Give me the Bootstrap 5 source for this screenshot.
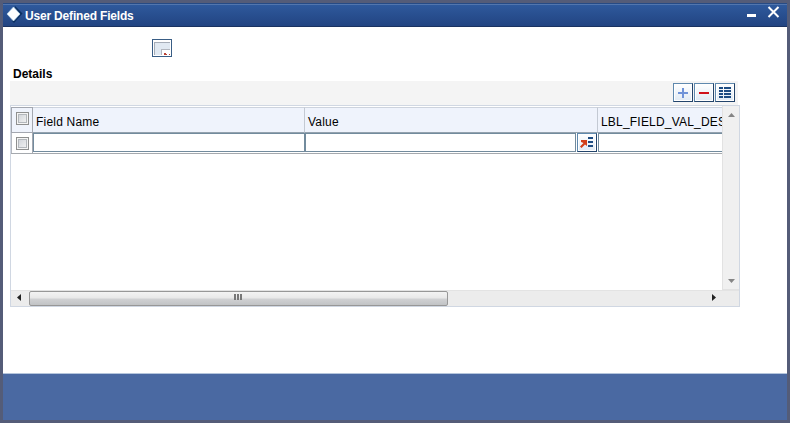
<!DOCTYPE html>
<html lang="en">

<head>
    <meta charset="UTF-8">
    <meta name="viewport" content="width=device-width, initial-scale=1.0">
    <title>User Defined Fields</title>
    <link href="https://cdn.jsdelivr.net/npm/bootstrap@5.3.0/dist/css/bootstrap.min.css" rel="stylesheet">
    <style>
        body {
            font-family: "Liberation Sans", Arial, sans-serif;
            font-size: 12px;
            line-height: 14px;
            color: #000;
        }
        svg {
            display: block;
        }
        .udf-window {
            height: 423px;
            border: 3px solid #545c78;
        }
        .udf-title {
            height: 24px;
            padding: 0 7px 0 2px;
            background: linear-gradient(#2f5a9d, #224482);
            border-top: 1px solid #274b85;
            border-bottom: 1px solid #1a3261;
            box-shadow: inset 0 1px 0 #5276ae;
            color: #fff;
        }
        .title-text {
            padding: 2px 0 0 2px;
            font-size: 12px;
            letter-spacing: -.18px;
        }
        .udf-content {
            padding: 12px 0 0 7px;
        }
        .udf-window-icon {
            margin: 0 0 9px 142px;
        }
        .udf-heading {
            height: 15px;
            font-size: 12px;
            line-height: 16px;
            margin: 0;
            padding-left: 3px;
        }
        .udf-toolbar {
            width: 728px;
            height: 24px;
            padding: 2px 3px 0 0;
            gap: 1px;
            background: #f4f4f4;
        }
        .tool-btn {
            width: 20px;
            height: 19px;
            padding: 0;
            background: linear-gradient(#fff, #e0eaf4);
            border: 1px solid #5f89ae;
            border-right: 1px solid #23446b;
            border-bottom: 1px solid #23446b;
            box-shadow: inset 0 0 0 1px #fff;
        }
        .udf-grid {
            width: 730px;
            height: 202px;
            border: 1px solid #d0d7e2;
        }
        .udf-view {
            width: 711px;
            height: 184px;
        }
        .grid-head, .grid-line {
            width: 860px;
        }
        .grid-head {
            height: 26px;
            margin-top: 1px;
            background: #eff3fc;
        }
        .grid-head > div {
            border-top: 1px solid #cdd3dd;
            border-right: 1px solid #c3c9d3;
            border-bottom: 1px solid #94a2ae;
        }
        .grid-head > .check-cell {
            border: 1px solid #a3a7b0;
        }
        .grid-line {
            height: 21px;
            border-bottom: 1px solid #a5a9ae;
        }
        .check-cell {
            width: 22px;
            border-left: 1px solid #b5b9c2;
            border-right: 1px solid #a3a7b0;
        }
        .name-cell {
            width: 272px;
        }
        .value-cell {
            width: 293px;
        }
        .desc-cell {
            width: 273px;
        }
        .head-text {
            padding: 7px 0 0 3px;
            font-size: 12px;
            letter-spacing: .2px;
            white-space: nowrap;
        }
        .grid-check {
            appearance: none;
            width: 13px;
            height: 13px;
            margin: 0;
            border: 1px solid #8e8f8f;
            box-shadow: inset 0 0 0 1px #f4f4f4, inset 0 0 0 2px #b3b7bc;
            background: linear-gradient(135deg, #cbcfd5, #f6f6f6);
        }
        .grid-line .grid-check {
            margin-top: 1px;
        }
        .grid-input {
            height: 19px;
            min-width: 0;
            padding: 0 3px;
            border: 1px solid #728b9d;
            border-radius: 0;
            font-size: 12px;
        }
        .value-cell.d-flex {
            gap: 1px;
            padding-right: 1px;
        }
        .scroll-v {
            width: 17px;
            height: 184px;
            padding: 7px 0 6px;
            border-left: 1px solid #e2e2e2;
            border-bottom: 1px solid #e2e2e2;
            background: #f0f0f0;
        }
        .scroll-h {
            width: 728px;
            height: 16px;
            background: #ececec;
            border-top: 1px solid #e3e3e3;
        }
        .scroll-thumb {
            width: 419px;
            height: 15px;
            border: 1px solid #979797;
            border-radius: 2px;
            background: linear-gradient(#f3f3f3 0, #e8e8e8 48%, #d1d2d4 52%, #c1c3c5 100%);
        }
        .scroll-right {
            margin-right: 19px;
        }
        .udf-footer {
            height: 47px;
            background: #4a69a2;
            border-top: 1px solid #b5c5dc;
        }
    </style>
</head>

<body>
    <div class="udf-window d-flex flex-column bg-white overflow-hidden">
        <div class="udf-title d-flex align-items-center flex-shrink-0">
            <svg width="18" height="18" viewBox="0 0 18 18">
                <path d="M10 0L17.500 7.500 9 17 7 15Z" fill="#0b2f61" />
                <path d="M8.500 1L15 8 8.500 15 2 8Z" fill="#fff" stroke="#b9daf0" stroke-width=".7" />
            </svg>
            <strong class="title-text">User Defined Fields</strong>
            <svg class="ms-auto" width="34" height="18" viewBox="0 0 34 18">
                <path d="M1 8h9v3H1z" fill="#fff" />
                <path d="M22.500 1l10 10M32.500 1l-10 10" stroke="#fff" stroke-width="2" />
            </svg>
        </div>

        <div class="udf-content flex-grow-1">
            <svg class="udf-window-icon" width="20" height="18" viewBox="0 0 20 18" shape-rendering="crispEdges">
                <path d="M0 0h20v18H0z" fill="#395d85" />
                <path d="M1 1h18v16H1z" fill="#fff" />
                <path d="M3 4h15v12H3z" fill="#e1e9f2" />
                <path d="M2 16V3h16v1H3v12z" fill="#a6adb8" />
                <path d="M10 11h8v6h-8z" fill="#fff" />
                <path d="M9 16v-6h9v1h-8v5z" fill="#b3b7bf" />
                <path d="M12 14h2v1h1v1h-3zM17 15h1v1h-1z" fill="#b84335" />
            </svg>
            <h6 class="udf-heading fw-bold">Details</h6>

            <div class="udf-toolbar d-flex justify-content-end">
                <button class="tool-btn" type="button" aria-label="Add">
                    <svg width="18" height="17" viewBox="0 0 18 17">
                        <path d="M4 8h10v2H4zM8 4h2v10H8z" fill="#6f93d8" />
                    </svg>
                </button>
                <button class="tool-btn" type="button" aria-label="Delete">
                    <svg width="18" height="17" viewBox="0 0 18 17">
                        <path d="M4 8h10v2H4z" fill="#d0121b" />
                    </svg>
                </button>
                <button class="tool-btn" type="button" aria-label="Single record view">
                    <svg width="18" height="17" viewBox="0 0 18 17">
                        <path d="M3 3h4v2H3zM8 3h7v2H8zM3 6h4v2H3zM8 6h7v2H8zM3 9h4v2H3zM8 9h7v2H8zM3 12h4v2H3zM8 12h7v2H8z" fill="#1c4b82" />
                    </svg>
                </button>
            </div>

            <div class="udf-grid">
                <div class="d-flex">
                    <div class="udf-view overflow-hidden">
                        <div class="grid-head d-flex">
                            <div class="check-cell d-flex justify-content-center pt-1">
                                <input class="grid-check" type="checkbox" aria-label="Select all">
                            </div>
                            <div class="name-cell head-text">Field Name</div>
                            <div class="value-cell head-text">Value</div>
                            <div class="desc-cell head-text">LBL_FIELD_VAL_DESC</div>
                        </div>
                        <div class="grid-line d-flex">
                            <div class="check-cell d-flex justify-content-center align-items-center">
                                <input class="grid-check" type="checkbox" aria-label="Select row">
                            </div>
                            <div class="name-cell d-flex">
                                <input class="grid-input w-100" type="text">
                            </div>
                            <div class="value-cell d-flex">
                                <input class="grid-input flex-grow-1" type="text">
                                <button class="tool-btn flex-shrink-0" type="button" aria-label="List of values">
                                    <svg width="18" height="17" viewBox="0 0 18 17">
                                        <path d="M3 6h6v6l-2-1.500L3.500 14 2 12.500 5.500 9 3 8z" fill="#d23f19" />
                                        <path d="M10 3h5v2h-5zM10 7h5v2h-5zM10 11h5v2h-5z" fill="#1c4b82" />
                                    </svg>
                                </button>
                            </div>
                            <div class="desc-cell d-flex">
                                <input class="grid-input w-100" type="text">
                            </div>
                        </div>
                    </div>
                    <div class="scroll-v d-flex flex-column align-items-center justify-content-between">
                        <svg width="7" height="4" viewBox="0 0 7 4"><path d="M0 4L3.500 0 7 4z" fill="#858585" /></svg>
                        <svg width="7" height="4" viewBox="0 0 7 4"><path d="M0 0L3.500 4 7 0z" fill="#858585" /></svg>
                    </div>
                </div>
                <div class="scroll-h d-flex align-items-center">
                    <svg width="18" height="15" viewBox="0 0 18 15"><path d="M10 3v7L6 6.500z" fill="#222" /></svg>
                    <div class="scroll-thumb d-flex justify-content-center">
                        <svg width="9" height="13" viewBox="0 0 9 13">
                            <path d="M0 2h2v6H0zM3 2h2v6H3zM6 2h2v6H6z" fill="#777" />
                        </svg>
                    </div>
                    <svg class="ms-auto scroll-right" width="18" height="15" viewBox="0 0 18 15"><path d="M10 3v7l4-3.500z" fill="#222" /></svg>
                </div>
            </div>
        </div>

        <div class="udf-footer flex-shrink-0"></div>
    </div>

    <script src="https://cdn.jsdelivr.net/npm/bootstrap@5.3.0/dist/js/bootstrap.bundle.min.js"></script>
</body>

</html>
